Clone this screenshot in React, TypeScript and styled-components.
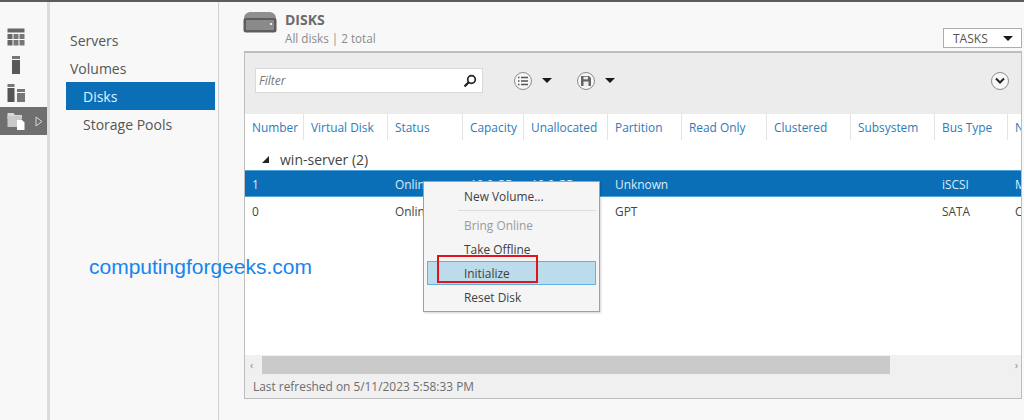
import React from "react";
import styled, { createGlobalStyle } from "styled-components";

const uiFont = `"Open Sans", "Noto Sans", "Liberation Sans", sans-serif`;
const columns = "59px 84px 75px 61px 84px 74px 85px 84px 84px 73px 120px";

const GlobalStyle = createGlobalStyle`
  html, body {
    margin: 0;
    padding: 0;
    background: #f8f8f8;
  }
  * {
    box-sizing: border-box;
  }
`;

const Page = styled.div`
  width: 1024px;
  height: 420px;
  display: flex;
  overflow: hidden;
  position: relative;
  background: #f8f8f8;
  border-top: 2px solid #5c5c5c;
  font-family: ${uiFont};
  font-size: 11.9px;
  color: #444;
`;

const Rail = styled.div`
  width: 50px;
  flex: none;
  border-right: 3px solid #dcdcdc;
  padding-top: 21px;
  display: flex;
  flex-direction: column;
`;

const RailItem = styled.div<{ $active?: boolean }>`
  height: 28px;
  padding-left: 7px;
  display: flex;
  align-items: center;
  gap: 10px;
  background: ${(p) => (p.$active ? "#6f6f6f" : "transparent")};
`;

const Nav = styled.div`
  width: 169px;
  flex: none;
  border-right: 1px solid #cfcfcf;
  padding: 24px 3px 0 16px;
  display: flex;
  flex-direction: column;
  font-size: 14px;
  color: #555;
`;

const NavItem = styled.div<{ $sub?: boolean; $active?: boolean }>`
  height: 28px;
  display: flex;
  align-items: center;
  padding-top: 1px;
  padding-left: ${(p) => (p.$sub ? "17px" : "4px")};
  background: ${(p) => (p.$active ? "#0b6fb8" : "transparent")};
  color: ${(p) => (p.$active ? "#e4f1fb" : "#555")};
`;

const Main = styled.div`
  flex: 1;
  min-width: 0;
  padding: 0 2px 0 25px;
  display: flex;
  flex-direction: column;
`;

const Head = styled.div`
  height: 49px;
  display: flex;
  align-items: flex-start;
  padding: 9px 0 0 0;
  position: relative;
  margin-left: -1px;
`;

const HeadText = styled.div`
  margin-left: 8px;
  display: flex;
  flex-direction: column;
  margin-top: 0;
`;

const Title = styled.div`
  font-size: 14px;
  line-height: 18px;
  font-weight: 700;
  color: #6b6b6b;
`;

const Subtitle = styled.div`
  font-size: 11.7px;
  line-height: 18px;
  color: #8b8b8b;
`;

const TasksButton = styled.div`
  margin-left: auto;
  margin-top: 17px;
  margin-right: 0;
  width: 79px;
  height: 20px;
  border: 1px solid #adadad;
  background: #fff;
  display: flex;
  align-items: center;
  justify-content: space-between;
  padding: 0 8px 0 9px;
  color: #555;
  font-size: 12px;
`;

const Caret = styled.span<{ $w?: number }>`
  display: inline-block;
  width: 0;
  height: 0;
  border-left: ${(p) => p.$w ?? 5}px solid transparent;
  border-right: ${(p) => p.$w ?? 5}px solid transparent;
  border-top: ${(p) => p.$w ?? 5}px solid #1a1a1a;
`;

const Panel = styled.div`
  height: 348px;
  border: 1px solid #bdbdbd;
  border-top-width: 2px;
  background: #fff;
  display: flex;
  flex-direction: column;
  overflow: hidden;
  position: relative;
`;

const Toolbar = styled.div`
  height: 61px;
  flex: none;
  background: #ececec;
  padding: 15px 12px 0 10px;
  display: flex;
  align-items: flex-start;
`;

const FilterBox = styled.div`
  width: 228px;
  height: 25px;
  background: #fff;
  border: 1px solid #d9d9d9;
  display: flex;
  align-items: center;
  justify-content: space-between;
  padding: 0 5px 0 3px;
  font-style: italic;
  font-size: 12px;
  color: #777;
`;

const RoundGroup = styled.div<{ $first?: boolean }>`
  margin-left: ${(p) => (p.$first ? "31px" : "25px")};
  height: 25px;
  display: flex;
  align-items: center;
  gap: 10px;
`;

const RoundIcon = styled.div<{ $end?: boolean }>`
  width: 18px;
  height: 18px;
  border-radius: 50%;
  border: 1px solid #8c8c8c;
  background: #f7f7f7;
  display: flex;
  align-items: center;
  justify-content: center;
  margin-left: ${(p) => (p.$end ? "auto" : "0")};
  margin-top: ${(p) => (p.$end ? "4px" : "0")};
`;

const HeaderRow = styled.div`
  height: 26px;
  flex: none;
  display: grid;
  grid-template-columns: ${columns};
  width: 900px;
  color: #2e7bb8;
`;

const HeaderCell = styled.div`
  padding-left: 7px;
  line-height: 26px;
  white-space: nowrap;
  border-right: 1px solid #e4e4e4;
`;

const ListArea = styled.div`
  flex: 1;
  min-height: 0;
  overflow: hidden;
`;

const GroupRow = styled.div`
  height: 30px;
  display: flex;
  align-items: flex-end;
  padding: 0 0 1px 17px;
  gap: 11px;
  font-size: 14px;
  color: #444;
`;

const GroupArrow = styled.span`
  width: 0;
  height: 0;
  margin-bottom: 6px;
  border-left: 7px solid transparent;
  border-bottom: 7px solid #222;
`;

const DataRow = styled.div<{ $selected?: boolean }>`
  height: 27px;
  width: 900px;
  display: grid;
  grid-template-columns: ${columns};
  align-items: center;
  background: ${(p) => (p.$selected ? "#0b6fb8" : "transparent")};
  color: ${(p) => (p.$selected ? "#dcecf8" : "#444")};
  box-shadow: ${(p) => (p.$selected ? "inset 0 1px 0 #4ea3dd, inset 0 -1px 0 #4ea3dd" : "none")};
`;

const DataCell = styled.div`
  padding-left: 7px;
  white-space: nowrap;
`;

const ScrollBar = styled.div`
  height: 19px;
  flex: none;
  background: #f0f0f0;
  display: flex;
  align-items: center;
  padding: 0 3px 0 5px;
  font-size: 11px;
  color: #888;
`;

const ScrollThumb = styled.div`
  width: 628px;
  height: 18px;
  margin-left: 9px;
  background: #cacaca;
`;

const ScrollEnd = styled.span`
  margin-left: auto;
`;

const StatusBar = styled.div`
  height: 24px;
  flex: none;
  background: #f0f0f0;
  padding-left: 8px;
  display: flex;
  align-items: center;
  font-size: 11.9px;
  color: #6d6d6d;
`;

const ContextMenu = styled.div`
  position: absolute;
  left: 423px;
  top: 179px;
  width: 177px;
  height: 131px;
  background: #f5f5f5;
  border: 1px solid #a0a0a0;
  padding: 2px 3px;
  display: flex;
  flex-direction: column;
  box-shadow: 1px 1px 2px rgba(0, 0, 0, 0.18);
  z-index: 2;
`;

const MenuItem = styled.div<{ $disabled?: boolean; $hot?: boolean }>`
  height: 24px;
  flex: none;
  padding-left: ${(p) => (p.$hot ? "36px" : "37px")};
  display: flex;
  align-items: center;
  color: ${(p) => (p.$disabled ? "#9a9a9a" : "#3f3f3f")};
  background: ${(p) => (p.$hot ? "#bcdcec" : "transparent")};
  border: ${(p) => (p.$hot ? "1px solid #5fb2e0" : "none")};
`;

const MenuSeparator = styled.div`
  height: 1px;
  flex: none;
  margin: 2px 0 2px 31px;
  background: #dedede;
`;

const RedBox = styled.div`
  position: absolute;
  left: 437px;
  top: 253px;
  width: 101px;
  height: 28px;
  border: 2px solid #e0141c;
  z-index: 3;
`;

const Watermark = styled.div`
  position: absolute;
  left: 89px;
  top: 253px;
  font-family: "Liberation Sans", Arial, sans-serif;
  font-size: 21px;
  line-height: 24px;
  color: #1585ee;
  z-index: 3;
`;

const TableIcon = () => (
  <svg width="18" height="18" viewBox="0 0 18 18">
    <rect x="0.5" y="0.5" width="17" height="4" fill="#666" />
    <rect x="0.5" y="6" width="5" height="5" fill="#666" />
    <rect x="6.5" y="6" width="5" height="5" fill="#777" />
    <rect x="12.5" y="6" width="5" height="5" fill="#777" />
    <rect x="0.5" y="12" width="5" height="5.5" fill="#666" />
    <rect x="6.5" y="12" width="5" height="5.5" fill="#777" />
    <rect x="12.5" y="12" width="5" height="5.5" fill="#777" />
  </svg>
);

const ServerIcon = () => (
  <svg width="18" height="18" viewBox="0 0 18 18">
    <rect x="5" y="0" width="8" height="3" fill="#777" />
    <rect x="5" y="4" width="8" height="14" fill="#5a5a5a" />
  </svg>
);

const GroupIcon = () => (
  <svg width="18" height="18" viewBox="0 0 18 18">
    <rect x="0.5" y="0" width="7" height="3" fill="#777" />
    <rect x="0.5" y="4" width="7" height="14" fill="#555" />
    <rect x="10" y="5" width="8" height="3" fill="#777" />
    <rect x="10" y="9" width="8" height="9" fill="#777" />
  </svg>
);

const FilesIcon = () => (
  <svg width="18" height="18" viewBox="0 0 18 18">
    <path d="M0.5 1h6l1.5 2h7v4H0.5z" fill="#d8d8d8" />
    <rect x="0.5" y="4" width="14" height="11" fill="#c9c9c9" />
    <path d="M10 8h5l2.5 2.5V18H10z" fill="#fff" />
  </svg>
);

const SmallDiskIcon = () => (
  <svg width="34" height="22" viewBox="0 0 34 22">
    <path d="M1 8C1 3 4 1 8 1h18c4 0 7 2 7 7z" fill="#8f8f8f" />
    <rect x="0.5" y="7" width="33" height="14.5" rx="2.5" fill="#5d5d5d" />
    <rect x="3" y="9" width="28" height="10" fill="#8a8a8a" />
    <rect x="27" y="12" width="2" height="2" fill="#e8e8e8" />
  </svg>
);

const SearchIcon = () => (
  <svg width="14" height="14" viewBox="0 0 14 14">
    <circle cx="8.5" cy="5.5" r="3.8" fill="none" stroke="#222" strokeWidth="1.7" />
    <path d="M5.6 8.4 1.5 12.5" stroke="#222" strokeWidth="2.2" />
  </svg>
);

const ListIcon = () => (
  <svg width="10" height="10" viewBox="0 0 10 10">
    <path d="M0 1.5h1.5M3 1.5h7M0 5h1.5M3 5h7M0 8.5h1.5M3 8.5h7" stroke="#555" strokeWidth="1.6" />
  </svg>
);

const SaveIcon = () => (
  <svg width="10" height="10" viewBox="0 0 10 10">
    <path d="M0 0h8l2 2v8H0z" fill="#666" />
    <rect x="2.5" y="0.8" width="4.5" height="2.5" fill="#eee" />
    <rect x="2.5" y="5.5" width="5" height="4.5" fill="#eee" />
  </svg>
);

const ChevronIcon = () => (
  <svg width="10" height="8" viewBox="0 0 10 8">
    <path d="M1 1.5 5 5.5 9 1.5" fill="none" stroke="#222" strokeWidth="2" />
  </svg>
);

const RailArrow = () => (
  <svg width="8" height="11" viewBox="0 0 8 11">
    <path d="M1 1v9l6-4.5z" fill="none" stroke="#d8d8d8" strokeWidth="1" />
  </svg>
);

const headers = [
  "Number",
  "Virtual Disk",
  "Status",
  "Capacity",
  "Unallocated",
  "Partition",
  "Read Only",
  "Clustered",
  "Subsystem",
  "Bus Type",
  "Name",
];

const rows = [
  ["1", "", "Online", "10.0 GB", "10.0 GB", "Unknown", "", "", "", "iSCSI", "MSFT Virtual"],
  ["0", "", "Online", "30.0 GB", "0.00 B", "GPT", "", "", "", "SATA", "Cloud Disk"],
];

export default function App() {
  return (
    <Page>
      <GlobalStyle />
      <Rail>
        <RailItem>
          <TableIcon />
        </RailItem>
        <RailItem>
          <ServerIcon />
        </RailItem>
        <RailItem>
          <GroupIcon />
        </RailItem>
        <RailItem $active>
          <FilesIcon />
          <RailArrow />
        </RailItem>
      </Rail>
      <Nav>
        <NavItem>Servers</NavItem>
        <NavItem>Volumes</NavItem>
        <NavItem $sub $active>
          Disks
        </NavItem>
        <NavItem $sub>Storage Pools</NavItem>
      </Nav>
      <Main>
        <Head>
          <SmallDiskIcon />
          <HeadText>
            <Title>DISKS</Title>
            <Subtitle>All disks | 2 total</Subtitle>
          </HeadText>
          <TasksButton>
            TASKS
            <Caret />
          </TasksButton>
        </Head>
        <Panel>
          <Toolbar>
            <FilterBox>
              Filter
              <SearchIcon />
            </FilterBox>
            <RoundGroup $first>
              <RoundIcon>
                <ListIcon />
              </RoundIcon>
              <Caret />
            </RoundGroup>
            <RoundGroup>
              <RoundIcon>
                <SaveIcon />
              </RoundIcon>
              <Caret />
            </RoundGroup>
            <RoundIcon $end>
              <ChevronIcon />
            </RoundIcon>
          </Toolbar>
          <HeaderRow>
            {headers.map((h) => (
              <HeaderCell key={h}>{h}</HeaderCell>
            ))}
          </HeaderRow>
          <ListArea>
            <GroupRow>
              <GroupArrow />
              win-server (2)
            </GroupRow>
            {rows.map((row, i) => (
              <DataRow key={row[0]} $selected={i === 0}>
                {row.map((cell, j) => (
                  <DataCell key={j}>{cell}</DataCell>
                ))}
              </DataRow>
            ))}
          </ListArea>
          <ScrollBar>
            ‹
            <ScrollThumb />
            <ScrollEnd>›</ScrollEnd>
          </ScrollBar>
          <StatusBar>Last refreshed on 5/11/2023 5:58:33 PM</StatusBar>
        </Panel>
      </Main>
      <Watermark>computingforgeeks.com</Watermark>
      <ContextMenu>
        <MenuItem>New Volume...</MenuItem>
        <MenuSeparator />
        <MenuItem $disabled>Bring Online</MenuItem>
        <MenuItem>Take Offline</MenuItem>
        <MenuItem $hot>Initialize</MenuItem>
        <MenuItem>Reset Disk</MenuItem>
      </ContextMenu>
      <RedBox />
    </Page>
  );
}
